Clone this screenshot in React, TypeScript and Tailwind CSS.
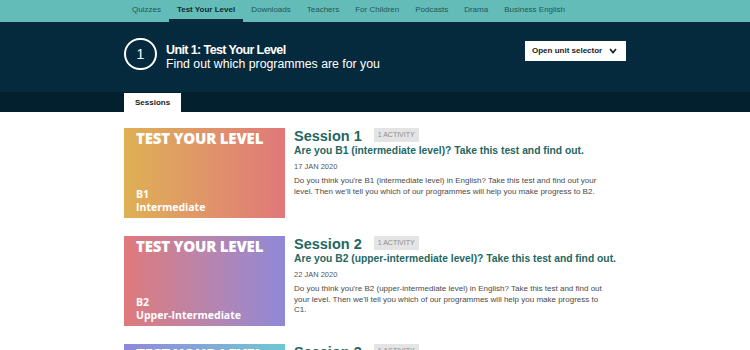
import React from "react";

const navItems = [
  "Quizzes",
  "Test Your Level",
  "Downloads",
  "Teachers",
  "For Children",
  "Podcasts",
  "Drama",
  "Business English",
];

type Session = {
  num: number;
  level: string;
  levelName: string;
  gradient: string;
  heading: string;
  date: string;
  lines: string[];
};

const sessions: Session[] = [
  {
    num: 1,
    level: "B1",
    levelName: "Intermediate",
    gradient: "bg-gradient-to-r from-[#deb052] to-[#e07879]",
    heading: "Are you B1 (intermediate level)? Take this test and find out.",
    date: "17 JAN 2020",
    lines: [
      "Do you think you're B1 (intermediate level) in English? Take this test and find out your",
      "level. Then we'll tell you which of our programmes will help you make progress to B2.",
    ],
  },
  {
    num: 2,
    level: "B2",
    levelName: "Upper-Intermediate",
    gradient: "bg-gradient-to-r from-[#e0797a] to-[#8e88d8]",
    heading: "Are you B2 (upper-intermediate level)? Take this test and find out.",
    date: "22 JAN 2020",
    lines: [
      "Do you think you're B2 (upper-intermediate level) in English? Take this test and find out",
      "your level. Then we'll tell you which of our programmes will help you make progress to",
      "C1.",
    ],
  },
  {
    num: 3,
    level: "C1",
    levelName: "Advanced",
    gradient: "bg-gradient-to-r from-[#8e88d8] to-[#6cc8d2]",
    heading: "Are you C1 (advanced level)? Take this test and find out.",
    date: "27 JAN 2020",
    lines: [
      "Do you think you're C1 (advanced level) in English? Take this test and find out your",
      "level. Then we'll tell you which of our programmes will help you make progress to C2.",
    ],
  },
];

function SessionCard({ s }: { s: Session }) {
  return (
    <div className="flex items-start gap-[9px] mb-[18px]">
      <div
        className={`${s.gradient} w-[161px] h-[90px] shrink-0 flex flex-col justify-between pl-[12px] pt-[3px] pb-[5px] text-white font-['Open_Sans',sans-serif]`}
      >
        <div className="text-[15px] leading-[15px] font-extrabold tracking-[-0.2px]">TEST YOUR LEVEL</div>
        <div className="text-[10.5px] leading-[12.5px] font-bold">
          <div>{s.level}</div>
          <div>{s.levelName}</div>
        </div>
      </div>
      <div className="flex flex-col font-['Liberation_Sans',Arial,sans-serif]">
        <div className="flex items-start gap-[12px] h-[16px]">
          <div className="text-[14.5px] leading-[16px] font-bold text-[#1f6762]">Session {s.num}</div>
          <div className="h-[14px] px-[4px] bg-[#e4e4e4] text-[#8d8d8d] text-[7px] leading-[14px]">1 ACTIVITY</div>
        </div>
        <div className="text-[10.3px] leading-[13px] font-bold text-[#1f6762] whitespace-nowrap">{s.heading}</div>
        <div className="mt-[5px] text-[7.5px] leading-[10px] text-[#555]">{s.date}</div>
        <p className="mt-[4px] text-[8px] leading-[10.5px] text-[#4a4a4a] max-w-[316px]">
          {s.lines.map((l, i) => (
            <span key={i} className="block whitespace-nowrap">
              {l}
            </span>
          ))}
        </p>
      </div>
    </div>
  );
}

export default function App() {
  return (
    <div className="w-full min-h-[350px] bg-white font-['Liberation_Sans',Arial,sans-serif]">
      <nav className="bg-[#64bcb8] h-[22px]">
        <div className="w-[502px] mx-auto flex h-full">
          {navItems.map((n) => {
            const active = n === "Test Your Level";
            return (
              <div
                key={n}
                className={`px-[8px] flex items-center text-[8px] border-b-[3px] ${
                  active ? "font-bold text-[#0f2b35] border-[#0b2a3c]" : "text-[#23555a] border-transparent"
                }`}
              >
                {n}
              </div>
            );
          })}
        </div>
      </nav>

      <header className="bg-[#062a3d] h-[70px]">
        <div className="w-[502px] mx-auto flex items-start justify-between">
          <div className="flex items-start">
            <div className="mt-[16px] w-[33px] h-[32px] rounded-full border-2 border-white flex items-center justify-center text-white text-[14px]">
              1
            </div>
            <div className="ml-[9px] mt-[21px] text-white">
              <div className="text-[12.5px] leading-[14px] font-bold tracking-[-0.6px]">Unit 1: Test Your Level</div>
              <div className="text-[12.3px] leading-[15px]">Find out which programmes are for you</div>
            </div>
          </div>
          <button className="mt-[19px] w-[101px] h-[20px] bg-white flex items-center pl-[7px] pr-[7px] justify-between text-[8px] font-bold text-[#1b1b1b]">
            <span>Open unit selector</span>
            <svg width="8" height="6" viewBox="0 0 8 6" className="mr-[2px]">
              <polyline points="1,1 4,4.5 7,1" fill="none" stroke="#1b2a35" strokeWidth="1.8" />
            </svg>
          </button>
        </div>
      </header>

      <div className="bg-[#03202e] h-[20px]">
        <div className="w-[502px] mx-auto flex h-full items-end">
          <div className="bg-white h-[19px] px-[11px] flex items-center text-[8px] font-bold text-[#1b1b1b]">Sessions</div>
        </div>
      </div>

      <main className="w-[502px] mx-auto pt-[16px]">
        {sessions.map((s) => (
          <SessionCard key={s.num} s={s} />
        ))}
      </main>
    </div>
  );
}
